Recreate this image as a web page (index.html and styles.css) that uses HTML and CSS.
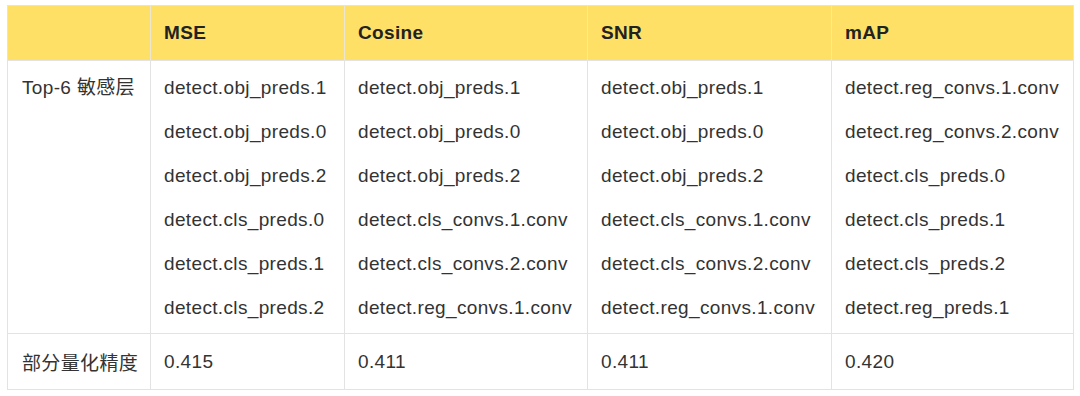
FILE: index.html
```html
<!DOCTYPE html>
<html lang="zh">
<head>
<meta charset="utf-8">
<link rel="stylesheet" href="styles.css">
</head>
<body>
<div class="grid">
  <div class="cell head"></div>
  <div class="cell head">MSE</div>
  <div class="cell head">Cosine</div>
  <div class="cell head">SNR</div>
  <div class="cell head">mAP</div>

  <div class="cell body first"><div class="line">Top-6 敏感层</div></div>
  <div class="cell body">
    <div class="line">detect.obj_preds.1</div>
    <div class="line">detect.obj_preds.0</div>
    <div class="line">detect.obj_preds.2</div>
    <div class="line">detect.cls_preds.0</div>
    <div class="line">detect.cls_preds.1</div>
    <div class="line">detect.cls_preds.2</div>
  </div>
  <div class="cell body">
    <div class="line">detect.obj_preds.1</div>
    <div class="line">detect.obj_preds.0</div>
    <div class="line">detect.obj_preds.2</div>
    <div class="line">detect.cls_convs.1.conv</div>
    <div class="line">detect.cls_convs.2.conv</div>
    <div class="line">detect.reg_convs.1.conv</div>
  </div>
  <div class="cell body">
    <div class="line">detect.obj_preds.1</div>
    <div class="line">detect.obj_preds.0</div>
    <div class="line">detect.obj_preds.2</div>
    <div class="line">detect.cls_convs.1.conv</div>
    <div class="line">detect.cls_convs.2.conv</div>
    <div class="line">detect.reg_convs.1.conv</div>
  </div>
  <div class="cell body">
    <div class="line">detect.reg_convs.1.conv</div>
    <div class="line">detect.reg_convs.2.conv</div>
    <div class="line">detect.cls_preds.0</div>
    <div class="line">detect.cls_preds.1</div>
    <div class="line">detect.cls_preds.2</div>
    <div class="line">detect.reg_preds.1</div>
  </div>

  <div class="cell foot first">部分量化精度</div>
  <div class="cell foot">0.415</div>
  <div class="cell foot">0.411</div>
  <div class="cell foot">0.411</div>
  <div class="cell foot">0.420</div>
</div>
</body>
</html>
```

FILE: styles.css
```css
html, body {
  margin: 0;
  padding: 0;
  background: #ffffff;
}
body {
  padding: 5px 0 0 7px;
  font-family: "Liberation Sans", "Noto Sans CJK SC", sans-serif;
  font-size: 19px;
  letter-spacing: 0.35px;
  color: #333333;
}
.grid {
  display: grid;
  grid-template-columns: 143px 194px 243px 244px 242px;
  width: 1066px;
  border-left: 1px solid #e3e3e6;
  border-top: 1px solid #e3e3e6;
}
.cell {
  border-right: 1px solid #e3e3e6;
  border-bottom: 1px solid #e3e3e6;
  padding: 0 0 0 13px;
  white-space: nowrap;
}
.cell.first {
  padding-left: 14px;
}
.head {
  background: #fee067;
  height: 54px;
  display: flex;
  align-items: center;
  font-weight: bold;
  color: #222222;
  border-right-color: #ede7cf;
  border-bottom-color: #e3e3e6;
}
.body {
  display: flex;
  flex-direction: column;
  padding-top: 5px;
  padding-bottom: 3px;
}
.line {
  line-height: 44px;
  height: 44px;
}
.foot {
  height: 55px;
  display: flex;
  align-items: center;
}
```
